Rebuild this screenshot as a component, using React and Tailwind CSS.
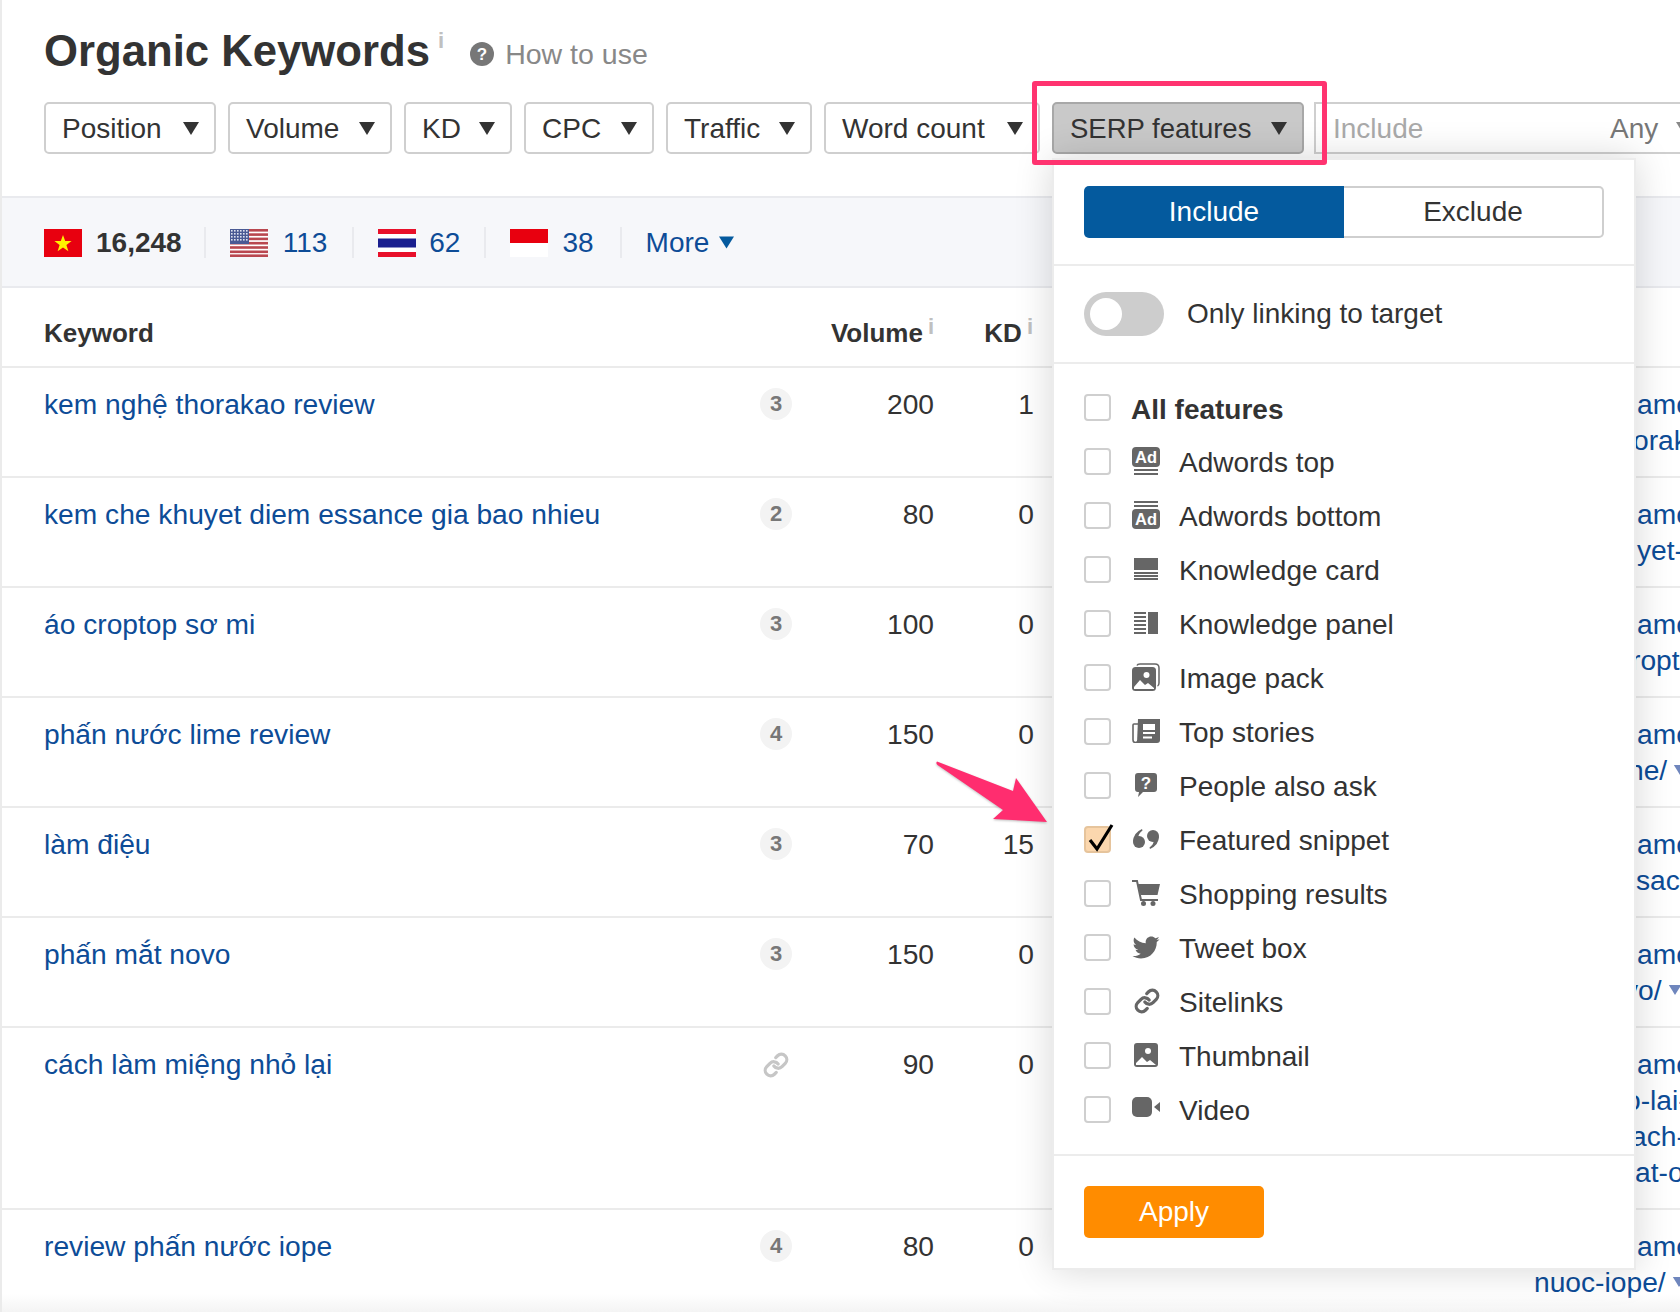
import { Link as LinkIcon } from 'lucide-react'
import { FaTwitter } from 'react-icons/fa'

const sans = '[font-family:"Liberation_Sans",Arial,sans-serif]'

function Caret({ className = 'w-4 h-[13px] text-[#333]' }) {
  return (
    <svg viewBox="0 0 16 13" className={`shrink-0 ${className}`}>
      <path d="M0 0h16L8 13z" fill="currentColor" />
    </svg>
  )
}

function Info({ className }) {
  return <span className={`font-bold text-[#c0c0c0] leading-none self-start ${className}`}>i</span>
}

function FilterButton({ label, width }) {
  return (
    <button className={`${width} h-[52px] shrink-0 flex items-center justify-between pl-[16px] pr-[15px] border-2 border-[#cfcfcf] rounded-[5px] bg-white text-[28px] text-[#333]`}>
      <span className="mt-[2px]">{label}</span>
      <Caret />
    </button>
  )
}

function FlagVN() {
  return (
    <svg viewBox="0 0 38 28" className="w-[38px] h-[28px] shrink-0">
      <rect width="38" height="28" fill="#e8000f" />
      <path d="M19 6l2.200 6.100h6.400l-5.200 3.900 2 6.200-5.400-3.800-5.400 3.800 2-6.200-5.200-3.900h6.400z" fill="#fff200" />
    </svg>
  )
}

function FlagUS() {
  const stripes = [0, 4.3, 8.6, 12.9, 17.2, 21.5, 25.4]
  return (
    <svg viewBox="0 0 38 28" className="w-[38px] h-[28px] shrink-0">
      <rect width="38" height="28" fill="#fff" />
      {stripes.map(y => <rect key={y} y={y} width="38" height="2.6" fill="#b9474f" />)}
      <rect width="19" height="15" fill="#4a5a94" />
      {[2, 5, 8, 11].map(y => [2, 5, 8, 11, 14, 17].map(x => (
        <rect key={`${x}-${y}`} x={x - 1} y={y - 1} width="1.6" height="1.6" fill="#dfe3f0" />
      )))}
    </svg>
  )
}

function FlagTH() {
  return (
    <svg viewBox="0 0 38 28" className="w-[38px] h-[28px] shrink-0">
      <rect width="38" height="28" fill="#fff" />
      <rect width="38" height="5" fill="#e8102a" />
      <rect y="23" width="38" height="5" fill="#e8102a" />
      <rect y="9.5" width="38" height="9" fill="#1a1f8f" />
    </svg>
  )
}

function FlagID() {
  return (
    <svg viewBox="0 0 38 28" className="w-[38px] h-[28px] shrink-0">
      <rect width="38" height="14" fill="#e8000f" />
      <rect y="14" width="38" height="14" fill="#fff" />
    </svg>
  )
}

const rows = [
  { kw: 'kem nghệ thorakao review', badge: '3', vol: '200', kd: '1', url: [['amc', 'pl-[103px]'], ['orak', 'pl-[99px]']] },
  { kw: 'kem che khuyet diem essance gia bao nhieu', badge: '2', vol: '80', kd: '0', url: [['amc', 'pl-[103px]'], ['yet-', 'pl-[103px]']] },
  { kw: 'áo croptop sơ mi', badge: '3', vol: '100', kd: '0', url: [['amc', 'pl-[103px]'], ['ropt', 'pl-[97px]']] },
  { kw: 'phấn nước lime review', badge: '4', vol: '150', kd: '0', url: [['amc', 'pl-[103px]'], ['ne/', 'pl-[94px]', true]] },
  { kw: 'làm điệu', badge: '3', vol: '70', kd: '15', url: [['amc', 'pl-[103px]'], ['sach', 'pl-[102px]']] },
  { kw: 'phấn mắt novo', badge: '3', vol: '150', kd: '0', url: [['amc', 'pl-[103px]'], ['vo/', 'pl-[90px]', true]] },
  { kw: 'cách làm miệng nhỏ lại', vol: '90', kd: '0', url: [['amc', 'pl-[103px]'], ['o-lai-', 'pl-[91px]'], ['ach-', 'pl-[97px]'], ['at-o', 'pl-[101px]']] },
  { kw: 'review phấn nước iope', badge: '4', vol: '80', kd: '0', url: [['amc', 'pl-[103px]'], ['nuoc-iope/', 'pl-0', true]] },
]

function Row({ row }) {
  return (
    <div className="flex pl-[42px] pt-[18px] pb-[18px] border-b-2 border-[#ebebeb] text-[28.2px] leading-[36px] text-[#333]">
      <a className="w-[716px] shrink-0 text-[#0d4c97]">{row.kw}</a>
      <div className="w-[32px] shrink-0 mt-[2px]">
        {row.badge
          ? <div className="w-[32px] h-[32px] rounded-full bg-[#f3f3f3] text-[#777] text-[22px] font-bold leading-[32px] text-center">{row.badge}</div>
          : <LinkIcon className="w-[26px] h-[26px] ml-[3px] mt-[4px] text-[#c6c6c6]" strokeWidth={3} />}
      </div>
      <div className="w-[142px] shrink-0 text-right">{row.vol}</div>
      <div className="w-[100px] shrink-0 text-right">{row.kd}</div>
      <div className="ml-auto w-[146px] shrink-0 text-[#0d4c97]">
        {row.url.map(([text, pad, caret]) => (
          <div key={text} className={`flex items-center gap-[6px] whitespace-nowrap ${pad}`}>
            {text}
            {caret && <Caret className="w-[14px] h-[10px] text-[#6f86bd]" />}
          </div>
        ))}
      </div>
    </div>
  )
}

function AdTop() {
  return (
    <svg viewBox="0 0 28 28" className="w-[28px] h-[28px]">
      <rect width="28" height="20" rx="4" fill="#666" />
      <text x="14" y="15.500" textAnchor="middle" fontSize="16.500" fontWeight="700" fontFamily="Liberation Sans" fill="#fff">Ad</text>
      <rect x="2" y="22" width="24" height="2" fill="#666" />
      <rect x="2" y="26" width="24" height="2" fill="#666" />
    </svg>
  )
}

function AdBottom() {
  return (
    <svg viewBox="0 0 28 28" className="w-[28px] h-[28px]">
      <rect x="2" y="0" width="24" height="2" fill="#666" />
      <rect x="2" y="4" width="24" height="2" fill="#666" />
      <rect y="8" width="28" height="20" rx="4" fill="#666" />
      <text x="14" y="23.500" textAnchor="middle" fontSize="16.500" fontWeight="700" fontFamily="Liberation Sans" fill="#fff">Ad</text>
    </svg>
  )
}

function KnowledgeCard() {
  return (
    <svg viewBox="0 0 28 22" className="w-[28px] h-[22px]">
      <rect x="2" width="24" height="12" fill="#666" />
      <rect x="2" y="14" width="24" height="2" fill="#666" />
      <rect x="2" y="17" width="24" height="2" fill="#666" />
      <rect x="2" y="20" width="24" height="2" fill="#666" />
    </svg>
  )
}

function KnowledgePanel() {
  return (
    <svg viewBox="0 0 28 22" className="w-[28px] h-[22px]">
      {[0, 4, 8, 12, 16, 20].map(y => <rect key={y} x="2" y={y} width="12" height="2" fill="#666" />)}
      <rect x="16" width="10" height="22" fill="#666" />
    </svg>
  )
}

function ImagePack() {
  return (
    <svg viewBox="0 0 28 28" className="w-[28px] h-[28px]">
      <path d="M5 2.500Q5.500 1 8 1h15q4 0 4 4v15q0 2.500-1.500 3" fill="none" stroke="#666" strokeWidth="1.500" />
      <rect y="4" width="24" height="24" rx="3.500" fill="#666" />
      <circle cx="14.500" cy="12" r="3" fill="#fff" />
      <path d="M2 24l6-7 5 5 3-2 6 5v1H2z" fill="#fff" />
    </svg>
  )
}

function TopStories() {
  return (
    <svg viewBox="0 0 28 24" className="w-[28px] h-[24px]">
      <path d="M6 0h22v21a3 3 0 01-3 3H5z" fill="#666" />
      <path d="M6 5H2a1 1 0 00-1 1v15a2.500 2.500 0 005 0" fill="none" stroke="#666" strokeWidth="1.600" />
      <rect x="11" y="5" width="12" height="6" fill="#fff" />
      <rect x="11" y="13" width="12" height="2" fill="#fff" />
      <rect x="11" y="17.500" width="9" height="2" fill="#fff" />
    </svg>
  )
}

function PeopleAsk() {
  return (
    <svg viewBox="0 0 28 24" className="w-[28px] h-[24px]">
      <path d="M6 0h16a3 3 0 013 3v13a3 3 0 01-3 3H11l-5 5 1-5H6a3 3 0 01-3-3V3a3 3 0 013-3z" fill="#666" />
      <text x="14" y="15.500" textAnchor="middle" fontSize="17" fontWeight="700" fontFamily="Liberation Sans" fill="#fff">?</text>
    </svg>
  )
}

function Quote() {
  return (
    <svg viewBox="0 0 28 20" className="w-[28px] h-[20px]">
      <circle cx="7" cy="13" r="6" fill="#666" />
      <path d="M1 13Q1 4 10 0l.5 1.500Q6 5 6.500 8z" fill="#666" />
      <circle cx="21" cy="7" r="6" fill="#666" />
      <path d="M27 7q0 9-9 13l-.5-1.500q4.500-3.500 4-6.500z" fill="#666" />
    </svg>
  )
}

function Cart() {
  return (
    <svg viewBox="0 0 28 26" className="w-[28px] h-[26px]">
      <path d="M0 1h5l4 19h17" fill="none" stroke="#666" strokeWidth="2" />
      <path d="M6 4h22l-2.500 11H8.500z" fill="#666" />
      <circle cx="11.500" cy="23.500" r="2.500" fill="#666" />
      <circle cx="21" cy="23.500" r="2.500" fill="#666" />
    </svg>
  )
}

function Thumbnail() {
  return (
    <svg viewBox="0 0 28 24" className="w-[28px] h-[24px]">
      <rect x="2" width="24" height="24" rx="3" fill="#666" />
      <circle cx="16" cy="8" r="3" fill="#fff" />
      <path d="M4 22v-2l6-6 5 5 3-2 6 5z" fill="#fff" />
    </svg>
  )
}

function Video() {
  return (
    <svg viewBox="0 0 28 20" className="w-[28px] h-[20px] -mt-[4px]">
      <rect width="20" height="20" rx="5" fill="#666" />
      <path d="M22 10l6-5v10z" fill="#666" />
    </svg>
  )
}

const features = [
  { label: 'Adwords top', icon: <AdTop /> },
  { label: 'Adwords bottom', icon: <AdBottom /> },
  { label: 'Knowledge card', icon: <KnowledgeCard /> },
  { label: 'Knowledge panel', icon: <KnowledgePanel /> },
  { label: 'Image pack', icon: <ImagePack /> },
  { label: 'Top stories', icon: <TopStories /> },
  { label: 'People also ask', icon: <PeopleAsk /> },
  { label: 'Featured snippet', icon: <Quote />, checked: true },
  { label: 'Shopping results', icon: <Cart /> },
  { label: 'Tweet box', icon: <FaTwitter className="w-[28px] h-[27px] text-[#666]" /> },
  { label: 'Sitelinks', icon: <LinkIcon className="w-[26px] h-[26px] ml-[1px] text-[#666]" strokeWidth={3} /> },
  { label: 'Thumbnail', icon: <Thumbnail /> },
  { label: 'Video', icon: <Video /> },
]

function Checkbox({ checked }) {
  return (
    <div className={`relative w-[27px] h-[27px] shrink-0 rounded-[4px] border-2 ${checked ? 'bg-[#fbd7ae] border-[#e6c49c]' : 'bg-white border-[#cfcfcf]'}`}>
      {checked && (
        <svg viewBox="0 0 32 32" className="absolute left-[-2px] top-[-7px] w-[32px] h-[32px] overflow-visible">
          <path d="M6 19l7 9L28 4" fill="none" stroke="#000" strokeWidth="3.200" />
        </svg>
      )}
    </div>
  )
}

function SerpDropdown() {
  return (
    <div className="absolute left-[1050px] top-[158px] z-10 w-[584px] h-[1112px] bg-white border-2 border-[#ececec] shadow-[0_0_36px_rgba(0,0,0,0.16)] text-[28px] text-[#333]">
      <div className="px-[30px] pt-[26px] pb-[26px] border-b-2 border-[#ececec]">
        <div className="flex h-[52px]">
          <div className="w-[260px] flex items-center justify-center rounded-l-[5px] bg-[#045a9e] text-white">Include</div>
          <div className="w-[260px] flex items-center justify-center rounded-r-[5px] border-2 border-l-0 border-[#cfcfcf]">Exclude</div>
        </div>
      </div>
      <div className="h-[98px] px-[30px] flex items-center gap-[23px] border-b-2 border-[#ececec]">
        <div className="w-[80px] h-[44px] rounded-full bg-[#cdcdcd] pl-[6px] flex items-center">
          <div className="w-[32px] h-[32px] rounded-full bg-white" />
        </div>
        Only linking to target
      </div>
      <div className="px-[30px] pt-[16px] pb-[18px] border-b-2 border-[#ececec]">
        <div className="h-[54px] flex items-center gap-[20px] font-bold">
          <Checkbox />
          <span className="mt-[6px]">All features</span>
        </div>
        {features.map(f => (
          <div key={f.label} className="h-[54px] flex items-center">
            <Checkbox checked={f.checked} />
            <div className="w-[28px] ml-[21px] mr-[19px] flex justify-center">{f.icon}</div>
            <span className="mt-[3px]">{f.label}</span>
          </div>
        ))}
      </div>
      <div className="px-[30px] pt-[30px]">
        <button className="w-[180px] h-[52px] rounded-[5px] bg-[#ff8c00] text-white">Apply</button>
      </div>
    </div>
  )
}

export default function App() {
  return (
    <div className={`relative w-[1680px] h-[1312px] overflow-hidden bg-white border-l-2 border-[#ebebeb] ${sans}`}>
      <div className="pl-[42px] pt-[26px]">
        <div className="h-[50px] flex items-center">
          <h1 className="text-[43.700px] leading-[50px] font-bold text-[#333]">Organic Keywords</h1>
          <Info className="text-[22px] ml-[8px] mt-[4px]" />
          <svg viewBox="0 0 24 24" className="w-[24px] h-[24px] ml-[26px] mt-[6px]">
            <circle cx="12" cy="12" r="12" fill="#777" />
            <text x="12" y="18" textAnchor="middle" fontSize="17" fontWeight="700" fontFamily="Liberation Sans" fill="#fff">?</text>
          </svg>
          <a className="ml-[11px] mt-[7px] text-[28.500px] text-[#888]">How to use</a>
        </div>
        <div className="flex gap-[12px] mt-[26px]">
          <FilterButton label="Position" width="w-[172px]" />
          <FilterButton label="Volume" width="w-[164px]" />
          <FilterButton label="KD" width="w-[108px]" />
          <FilterButton label="CPC" width="w-[130px]" />
          <FilterButton label="Traffic" width="w-[146px]" />
          <FilterButton label="Word count" width="w-[216px]" />
          <button className="w-[252px] h-[52px] shrink-0 flex items-center justify-between pl-[16px] pr-[15px] border-2 border-[#a8a8a8] rounded-[5px] bg-[#c9c9c9] text-[27.500px] text-[#333]">
            <span className="mt-[2px]">SERP features</span>
            <Caret />
          </button>
          <div className="w-[400px] h-[52px] shrink-0 -ml-[2px] flex items-center pl-[17px] border-2 border-[#cfcfcf] text-[28px]">
            <span className="text-[#aaa] w-[277px] mt-[2px]">Include</span>
            <span className="text-[#777] mt-[2px]">Any</span>
            <Caret className="w-4 h-[13px] ml-[18px] text-[#888]" />
          </div>
        </div>
      </div>

      <div className="h-[92px] mt-[42px] pl-[42px] pt-[1px] flex items-center border-y-2 border-[#e9eaee] bg-[#f6f7fa] text-[28px] text-[#0d4c97]">
        <FlagVN />
        <span className="ml-[14px] font-bold text-[#333]">16,248</span>
        <div className="w-[2px] h-[31px] ml-[22px] mr-[24px] bg-[#e9eaee]" />
        <FlagUS />
        <span className="ml-[15px]">113</span>
        <div className="w-[2px] h-[31px] ml-[25px] mr-[24px] bg-[#e9eaee]" />
        <FlagTH />
        <span className="ml-[13px]">62</span>
        <div className="w-[2px] h-[31px] ml-[24px] mr-[24px] bg-[#e9eaee]" />
        <FlagID />
        <span className="ml-[14px]">38</span>
        <div className="w-[2px] h-[31px] ml-[26px] mr-[24px] bg-[#e9eaee]" />
        <span>More</span>
        <Caret className="w-[15px] h-[13px] ml-[10px] text-[#045a9e]" />
      </div>

      <div className="h-[80px] pt-[12px] pl-[42px] flex items-center border-b-2 border-[#ebebeb] text-[26px] font-bold text-[#333]">
        <div className="w-[749px]">Keyword</div>
        <div className="w-[141px] flex justify-end items-center gap-[5px]">
          Volume
          <Info className="text-[22px] mt-[2px]" />
        </div>
        <div className="w-[99px] flex justify-end items-center gap-[5px]">
          KD
          <Info className="text-[22px] mt-[2px]" />
        </div>
      </div>

      {rows.map(r => <Row key={r.kw} row={r} />)}

      <SerpDropdown />

      {/* red annotation box around the SERP button */}
      <div className="absolute left-[1030px] top-[81px] z-20 w-[295px] h-[84px] border-[5px] border-[#ff3370] rounded-[3px]" />

      {/* arrow annotation */}
      <svg viewBox="0 0 120 70" className="absolute left-[930px] top-[758px] z-20 w-[120px] h-[70px] drop-shadow-[0_1px_1px_rgba(0,0,0,0.25)]">
        <path d="M5 3.500L81 33l3-13 31 44-54-3 10-9L5.500 7q-2-2-.5-3.500z" fill="#ff2d6f" />
      </svg>

      <div className="absolute inset-x-0 bottom-0 h-[18px] bg-gradient-to-t from-[#f4f4f4] to-transparent" />
    </div>
  )
}
